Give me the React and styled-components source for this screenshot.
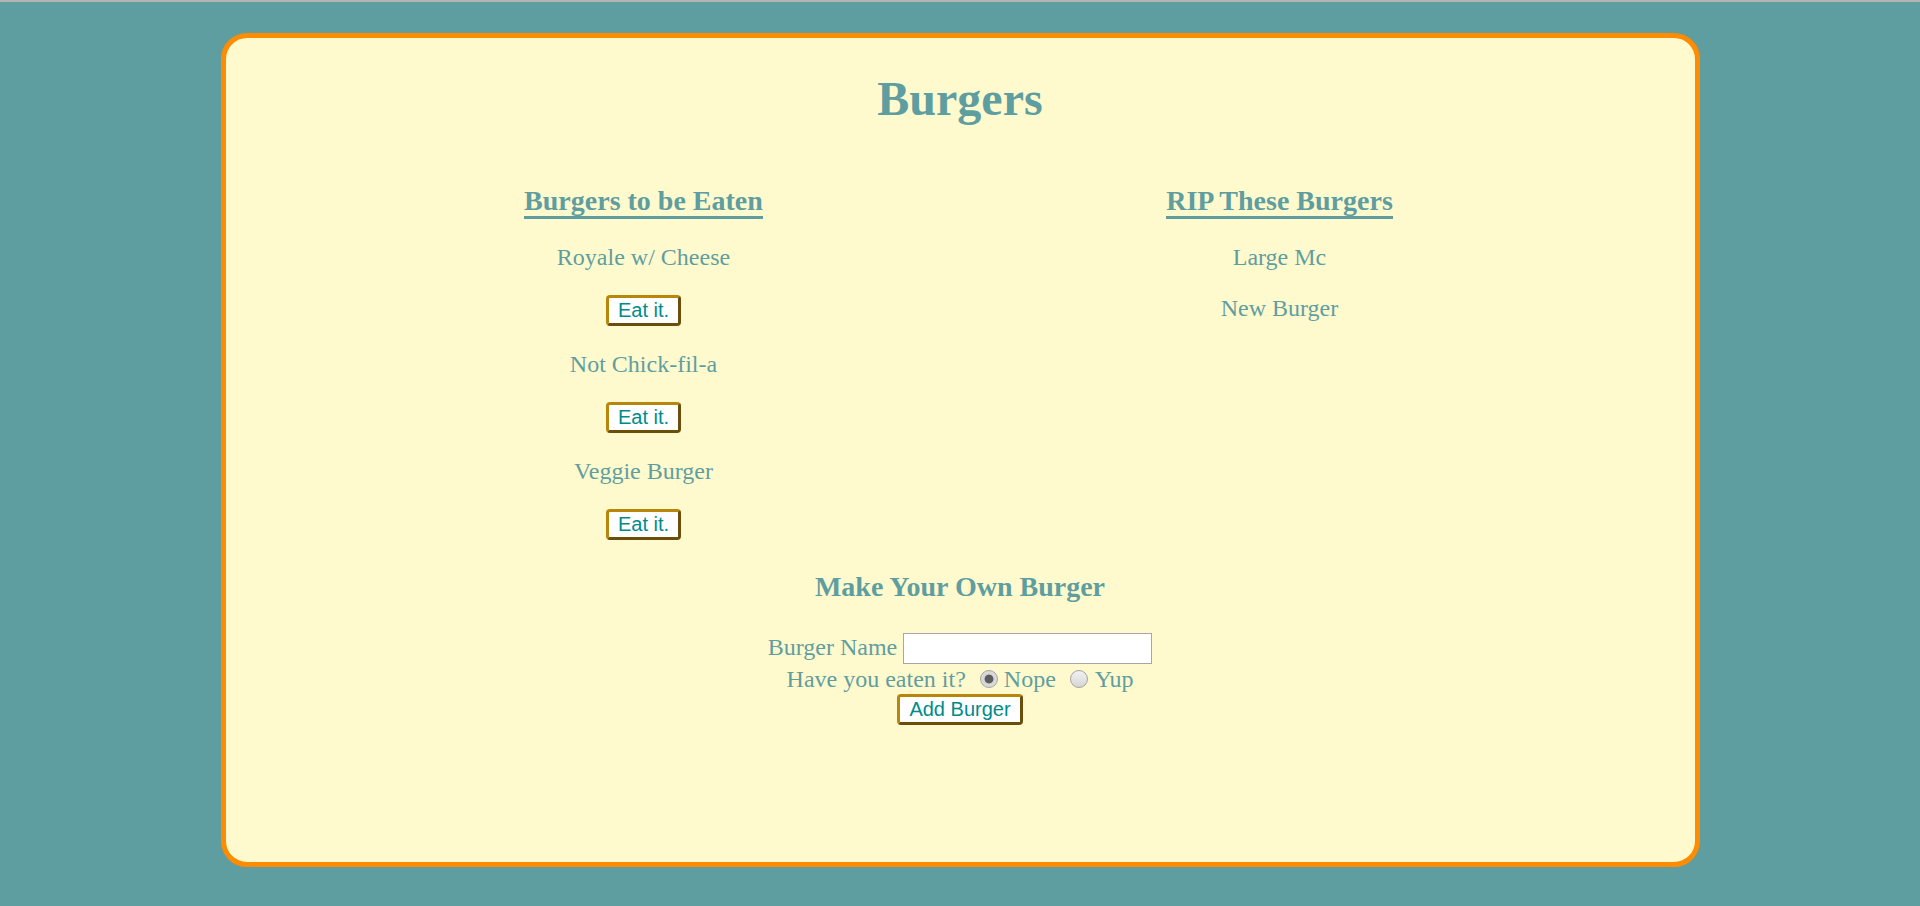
import React from "react";
import styled, { createGlobalStyle } from "styled-components";

const GlobalStyle = createGlobalStyle`
  html, body {
    margin: 0;
    padding: 0;
    background: #5f9ea0;
  }
  body {
    font-family: "Liberation Serif", "Times New Roman", serif;
    color: #5f9ea0;
  }
`;

const Page = styled.div`
  min-height: 100vh;
  box-sizing: border-box;
  border-top: 2px solid #b4b4b4;
  padding-top: 31px;
`;

const Card = styled.main`
  box-sizing: border-box;
  width: 1479px;
  height: 834px;
  margin: 0 auto;
  background: #fffacd;
  border: 5px solid #ff8c00;
  border-radius: 26px;
  text-align: center;
  overflow: hidden;
`;

const Title = styled.h1`
  margin: 33px 0 0;
  font-size: 48px;
  line-height: 56px;
  font-weight: bold;
`;

const Columns = styled.div`
  width: 1272px;
  padding-left: 3px;
  margin: 58px auto 0;
  display: grid;
  grid-template-columns: 1fr 1fr;
  align-items: start;
`;

const Column = styled.section`
  display: flex;
  flex-direction: column;
  align-items: center;
`;

const ColumnTitle = styled.h2`
  margin: 0;
  font-size: 28px;
  line-height: 32px;
  font-weight: bold;
`;

const Underlined = styled.span`
  border-bottom: 3px solid #5f9ea0;
`;

const ItemName = styled.p`
  margin: ${(p) => (p.$first ? "26px" : p.$afterButton ? "24px" : "23px")} 0 0;
  font-size: 24px;
  line-height: 28px;
`;

const Button = styled.button`
  box-sizing: border-box;
  height: 31px;
  margin-top: ${(p) => p.$mt || "0"};
  padding: 0 9px;
  background: #ffffff;
  color: #008b8b;
  font-family: "Liberation Sans", Arial, sans-serif;
  font-size: 20px;
  line-height: 23px;
  border: 3px solid;
  border-color: #b8860b #6b4e0a #6b4e0a #b8860b;
  border-radius: 4px;
  cursor: pointer;
`;

const Form = styled.form`
  display: flex;
  flex-direction: column;
  align-items: center;
`;

const FormTitle = styled.h2`
  margin: 31px 0 0;
  font-size: 28px;
  line-height: 32px;
  font-weight: bold;
`;

const NameRow = styled.div`
  margin-top: 30px;
  display: flex;
  align-items: flex-end;
  gap: 6px;
  font-size: 24px;
`;

const Label = styled.label`
  line-height: 28px;
  margin-bottom: 3px;
`;

const TextInput = styled.input`
  box-sizing: border-box;
  width: 249px;
  height: 31px;
  margin: 0;
  padding: 1px 3px;
  border: 1px solid #a6a6a6;
  background: #ffffff;
  font-family: "Liberation Serif", "Times New Roman", serif;
  font-size: 20px;
  outline: none;
`;

const RadioRow = styled.div`
  margin-top: 1px;
  height: 28px;
  display: flex;
  align-items: center;
  font-size: 24px;
  line-height: 28px;
`;

const Radio = styled.input`
  appearance: none;
  box-sizing: border-box;
  width: 18px;
  height: 18px;
  margin: 0 ${(p) => p.$after}px 0 ${(p) => p.$before}px;
  border: 1px solid #a3a3a3;
  border-radius: 50%;
  background: ${(p) =>
    p.checked
      ? "radial-gradient(circle, #5c5c5c 0 4px, #d4d4d4 4.8px, #e8e8e8 100%)"
      : "linear-gradient(#f2f2f2, #d6d6d6)"};
  cursor: pointer;
`;

const eaten = ["Royale w/ Cheese", "Not Chick-fil-a", "Veggie Burger"];
const devoured = ["Large Mc", "New Burger"];

export default function App() {
  return (
    <>
      <GlobalStyle />
      <Page>
        <Card>
          <Title>Burgers</Title>
          <Columns>
            <Column>
              <ColumnTitle>
                <Underlined>Burgers to be Eaten</Underlined>
              </ColumnTitle>
              {eaten.map((name, i) => (
                <React.Fragment key={name}>
                  <ItemName $first={i === 0} $afterButton={i > 0}>
                    {name}
                  </ItemName>
                  <Button type="button" $mt="24px">
                    Eat it.
                  </Button>
                </React.Fragment>
              ))}
            </Column>
            <Column>
              <ColumnTitle>
                <Underlined>RIP These Burgers</Underlined>
              </ColumnTitle>
              {devoured.map((name, i) => (
                <ItemName key={name} $first={i === 0}>
                  {name}
                </ItemName>
              ))}
            </Column>
          </Columns>
          <Form onSubmit={(e) => e.preventDefault()}>
            <FormTitle>Make Your Own Burger</FormTitle>
            <NameRow>
              <Label htmlFor="burger-name">Burger Name</Label>
              <TextInput id="burger-name" type="text" />
            </NameRow>
            <RadioRow>
              <span>Have you eaten it?</span>
              <Radio type="radio" name="eaten" checked readOnly $before={14} $after={6} />
              <span>Nope</span>
              <Radio type="radio" name="eaten" checked={false} readOnly $before={14} $after={7} />
              <span>Yup</span>
            </RadioRow>
            <Button type="submit" $mt="1px">
              Add Burger
            </Button>
          </Form>
        </Card>
      </Page>
    </>
  );
}
